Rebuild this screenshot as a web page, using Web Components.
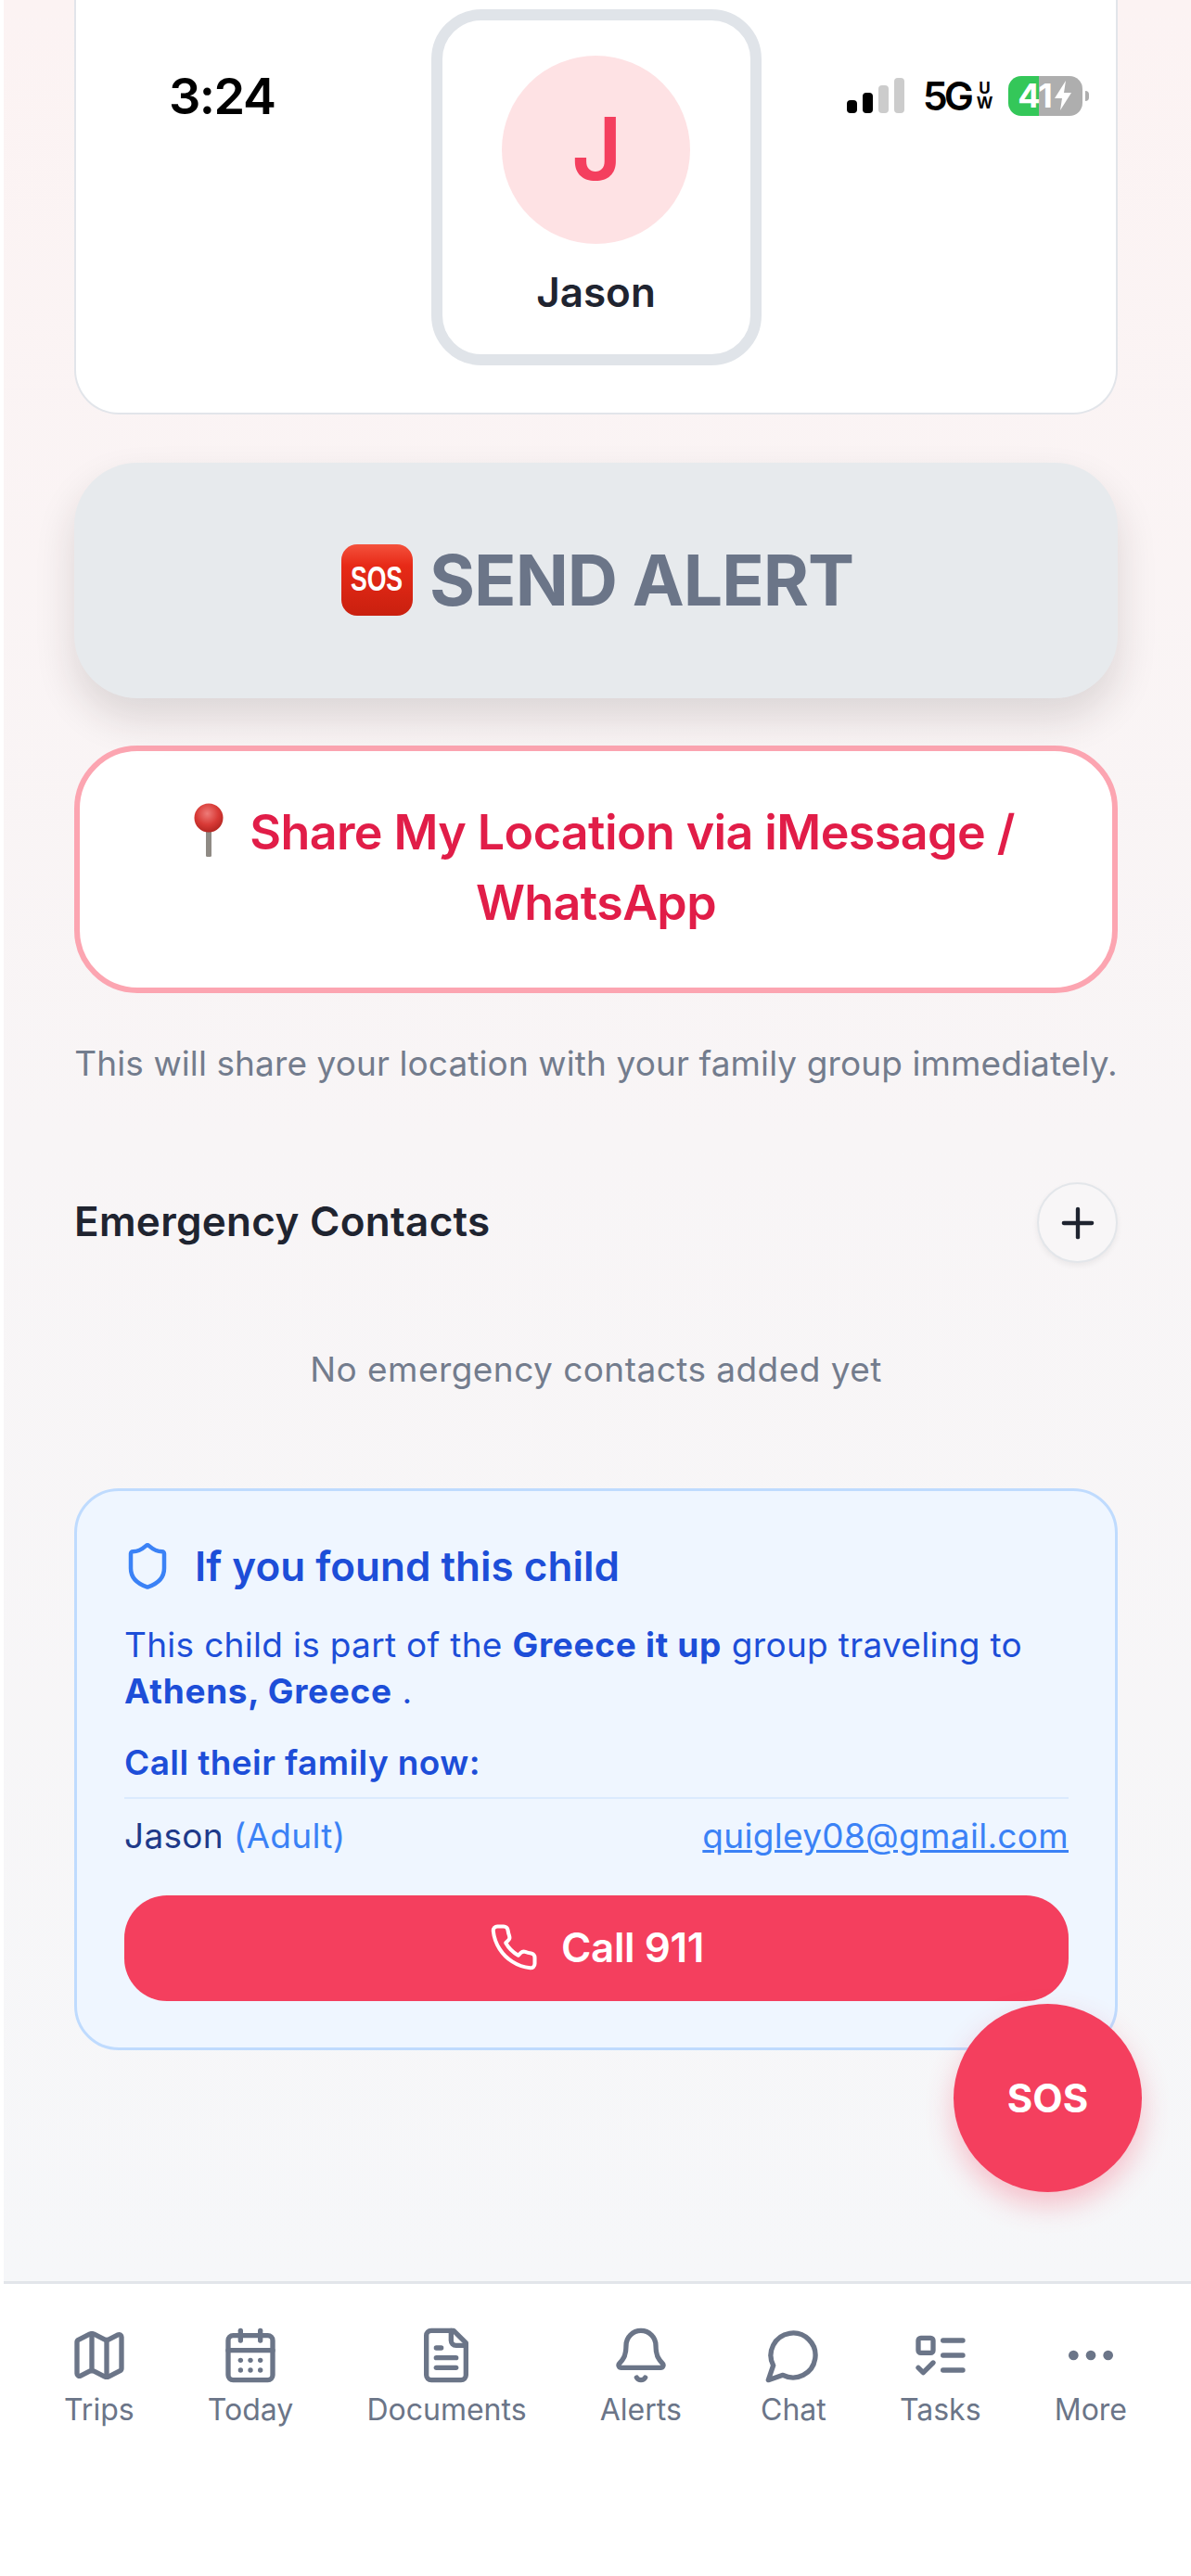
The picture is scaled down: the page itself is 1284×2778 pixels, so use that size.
<!DOCTYPE html>
<html lang="en">
<head>
<meta charset="utf-8">
<title>SOS</title>
<style>
  html, body { margin: 0; background: #fff; }
  body { font-family: Inter, "Noto Sans", sans-serif; }
</style>
</head>
<body>
<app-shell>
  <status-overlay slot="overlay"></status-overlay>
  <sos-fab slot="overlay">SOS</sos-fab>
  <member-card name="Jason" initial="J"></member-card>
  <alert-button>SEND ALERT</alert-button>
  <share-button></share-button>
  <contacts-section></contacts-section>
  <found-card></found-card>
  <bottom-nav slot="nav">
    <nav-item>
      <svg slot="icon" viewBox="0 0 24 24"><path d="M14.106 5.553a2 2 0 0 0 1.788 0l3.659-1.83A1 1 0 0 1 21 4.619v12.764a1 1 0 0 1-.553.894l-4.553 2.277a2 2 0 0 1-1.788 0l-4.212-2.106a2 2 0 0 0-1.788 0l-3.659 1.83A1 1 0 0 1 3 19.381V6.618a1 1 0 0 1 .553-.894l4.553-2.277a2 2 0 0 1 1.788 0z"/><path d="M15 5.764v15"/><path d="M9 3.236v15"/></svg>
      Trips
    </nav-item>
    <nav-item>
      <svg slot="icon" viewBox="0 0 24 24"><path d="M8 2v4"/><path d="M16 2v4"/><rect x="3" y="4" width="18" height="18" rx="2"/><path d="M3 10h18"/><path d="M8 14h.01"/><path d="M12 14h.01"/><path d="M16 14h.01"/><path d="M8 18h.01"/><path d="M12 18h.01"/><path d="M16 18h.01"/></svg>
      Today
    </nav-item>
    <nav-item>
      <svg slot="icon" viewBox="0 0 24 24"><path d="M15 2H6a2 2 0 0 0-2 2v16a2 2 0 0 0 2 2h12a2 2 0 0 0 2-2V7Z"/><path d="M14 2v4a2 2 0 0 0 2 2h4"/><path d="M10 9H8"/><path d="M16 13H8"/><path d="M16 17H8"/></svg>
      Documents
    </nav-item>
    <nav-item>
      <svg slot="icon" viewBox="0 0 24 24"><path d="M10.268 21a2 2 0 0 0 3.464 0"/><path d="M3.262 15.326A1 1 0 0 0 4 17h16a1 1 0 0 0 .74-1.673C19.41 13.956 18 12.499 18 8A6 6 0 0 0 6 8c0 4.499-1.411 5.956-2.738 7.326"/></svg>
      Alerts
    </nav-item>
    <nav-item>
      <svg slot="icon" viewBox="0 0 24 24"><path d="M7.9 20A9 9 0 1 0 4 16.1L2 22Z"/></svg>
      Chat
    </nav-item>
    <nav-item>
      <svg slot="icon" viewBox="0 0 24 24"><rect x="3" y="5" width="6" height="6" rx="1"/><path d="m3 17 2 2 4-4"/><path d="M13 6h8"/><path d="M13 12h8"/><path d="M13 18h8"/></svg>
      Tasks
    </nav-item>
    <nav-item>
      <svg slot="icon" viewBox="0 0 24 24"><circle cx="12" cy="12" r="1"/><circle cx="19" cy="12" r="1"/><circle cx="5" cy="12" r="1"/></svg>
      More
    </nav-item>
  </bottom-nav>
</app-shell>

<script>
class AppShell extends HTMLElement {
  constructor() {
    super();
    this.attachShadow({ mode: "open" });
    this.shadowRoot.innerHTML = `
      <style>
        :host { display: block; position: relative; height: 2778px; overflow: hidden; padding-left: 4px; background: #fff; }
        #frame { height: 100%; display: flex; flex-direction: column; }
        main {
          flex: 1; min-height: 0; overflow: hidden;
          padding: 0 79px 0 76px;
          background: linear-gradient(180deg, #fcf3f3 0%, #f8f5f6 50%, #f6f7f9 100%);
        }
      </style>
      <div id="frame">
        <main><slot></slot></main>
        <slot name="nav"></slot>
      </div>
      <slot name="overlay"></slot>
    `;
  }
}
customElements.define("app-shell", AppShell);

class StatusOverlay extends HTMLElement {
  constructor() {
    super();
    this.attachShadow({ mode: "open" });
    this.shadowRoot.innerHTML = `
      <style>
        :host {
          position: absolute; top: 0; left: 0; right: 0; height: 206px;
          display: flex; justify-content: space-between; align-items: center;
          padding: 0 110px 0 182px; box-sizing: border-box;
          color: #000;
        }
        #time { font: 600 54px/60px Inter, sans-serif; letter-spacing: -1.5px; margin-top: 2px; }
        #right { display: flex; align-items: center; }
        #bars { display: flex; align-items: flex-end; gap: 6px; height: 38px; margin-right: 20px; }
        #bars i { display: block; width: 11px; border-radius: 4px; background: #ccc; }
        #bars i:nth-child(1) { height: 14px; background: #000; }
        #bars i:nth-child(2) { height: 22px; background: #000; }
        #bars i:nth-child(3) { height: 30px; }
        #bars i:nth-child(4) { height: 38px; }
        #net { font: 600 43px/42px Inter, sans-serif; letter-spacing: -4px; margin-right: 8px; }
        #uw { display: flex; flex-direction: column; width: 14px; align-items: center; font: 700 17px/16px Inter, sans-serif; letter-spacing: -1px; margin-right: 19px; }
        #bat {
          width: 80px; height: 43px; border-radius: 14px;
          background: linear-gradient(90deg, #34c759 41%, #aeaeae 41%);
          color: #fff; font: 700 36px/43px Inter, sans-serif;
          display: flex; align-items: center; justify-content: center; gap: 0;
          letter-spacing: -1px;
        }
        #bat svg { width: 22px; height: 34px; margin-left: 1px; }
        #nub { width: 4px; height: 11px; background: #aeaeae; border-radius: 0 4px 4px 0; margin-left: 3px; }
      </style>
      <span id="time">3:24</span>
      <div id="right">
        <div id="bars"><i></i><i></i><i></i><i></i></div>
        <span id="net">5G</span>
        <span id="uw"><span>U</span><span>W</span></span>
        <div id="bat">41<svg viewBox="0 0 22 34"><path d="M14 1 2 20h8l-2 13 12-19h-8z" fill="#fff"/></svg></div>
        <div id="nub"></div>
      </div>
    `;
  }
}
customElements.define("status-overlay", StatusOverlay);

class MemberCard extends HTMLElement {
  constructor() {
    super();
    this.attachShadow({ mode: "open" });
    this.shadowRoot.innerHTML = `
      <style>
        :host {
          display: flex; justify-content: center; height: 447px; box-sizing: border-box;
          padding-top: 10px;
          background: #fff; border: 2px solid #e2e5ea; border-top: 0;
          border-radius: 0 0 48px 48px;
        }
        #tile {
          width: 356px; height: 384px; box-sizing: border-box;
          border: 12px solid #e0e4e9; border-radius: 54px;
          display: flex; flex-direction: column; align-items: center;
          padding-top: 38px;
        }
        #avatar {
          width: 203px; height: 203px; border-radius: 50%; box-sizing: border-box;
          background: #fee2e4; color: #f43f5e;
          display: flex; align-items: center; justify-content: center;
          font: 600 94px/1 Inter, sans-serif; padding: 0 0 4px 2px;
        }
        #name { margin-top: 24px; font: 600 44px/56px Inter, sans-serif; color: #1f2430; }
      </style>
      <div id="tile">
        <div id="avatar"></div>
        <div id="name"></div>
      </div>
    `;
    this.shadowRoot.getElementById("avatar").textContent = this.getAttribute("initial") || "J";
    this.shadowRoot.getElementById("name").textContent = this.getAttribute("name") || "Jason";
  }
}
customElements.define("member-card", MemberCard);

class AlertButton extends HTMLElement {
  constructor() {
    super();
    this.attachShadow({ mode: "open" });
    this.shadowRoot.innerHTML = `
      <style>
        :host {
          display: flex; align-items: center; justify-content: center; gap: 21px;
          position: relative;
          height: 254px; margin-top: 52px; box-sizing: border-box; padding-bottom: 2px;
          background: #e7eaed; border-radius: 68px;
          box-shadow: 0 22px 44px rgba(40, 30, 30, .14);
          color: #6b7588; font: 700 75px/1 Inter, sans-serif; letter-spacing: -1px;
        }
        #sos {
          width: 77px; height: 77px; border-radius: 17px; margin: 0 -3px 0 3px;
          background: linear-gradient(180deg, #f4513c 0%, #e72a17 30%, #c9200f 100%);
          display: flex; align-items: center; justify-content: center;
          overflow: hidden;
        }
        #sos span {
          color: #fff; font: 700 36px/1 "Liberation Sans", sans-serif; letter-spacing: 0;
          transform: scaleX(.74);
        }
      </style>
      <span id="sos"><span>SOS</span></span>
      <span><slot></slot></span>
    `;
  }
}
customElements.define("alert-button", AlertButton);

class ShareButton extends HTMLElement {
  constructor() {
    super();
    this.attachShadow({ mode: "open" });
    this.shadowRoot.innerHTML = `
      <style>
        :host {
          display: flex; align-items: center; justify-content: center;
          height: 267px; margin-top: 51px; box-sizing: border-box;
          background: #fff; border: 6px solid #fca5b1; border-radius: 68px;
          text-align: center; color: #e11d48;
          font: 600 52px/76px Inter, sans-serif; letter-spacing: -.6px;
          padding-bottom: 3px;
        }
        svg { width: 32px; height: 58px; vertical-align: -8px; margin: 0 28px 0 18px; }
      </style>
      <div>
        <svg viewBox="0 0 32 58">
          <defs><radialGradient id="ball" cx=".45" cy=".35" r=".65"><stop offset="0" stop-color="#ee7b78"/><stop offset=".6" stop-color="#d83a36"/><stop offset="1" stop-color="#b52622"/></radialGradient></defs>
          <rect x="13" y="28" width="6" height="30" rx="1.5" fill="#8f8a84"/>
          <circle cx="16" cy="16" r="15.5" fill="url(#ball)"/>
        </svg>Share My Location via iMessage /<br>WhatsApp
      </div>
    `;
  }
}
customElements.define("share-button", ShareButton);

class ContactsSection extends HTMLElement {
  constructor() {
    super();
    this.attachShadow({ mode: "open" });
    this.shadowRoot.innerHTML = `
      <style>
        :host { display: block; }
        #note { margin: 51px 0 0; text-align: center; font: 400 37px/50px Inter, sans-serif; letter-spacing: .1px; color: #737c8d; white-space: nowrap; }
        #head { display: flex; align-items: center; justify-content: space-between; margin-top: 103px; }
        h2 { margin: -4px 0 0; font: 600 44px/56px Inter, sans-serif; letter-spacing: .3px; color: #1f2430; }
        button {
          width: 87px; height: 87px; padding: 0; border-radius: 50%;
          background: #f8f6f7; border: 2px solid #e3e6ea;
          box-shadow: 0 3px 6px rgba(0, 0, 0, .06);
          display: flex; align-items: center; justify-content: center;
        }
        svg { width: 52px; height: 52px; fill: none; stroke: #1f2430; stroke-width: 2; stroke-linecap: round; }
        #empty { margin: 90px 0 0; text-align: center; font: 400 37px/50px Inter, sans-serif; letter-spacing: .45px; color: #737c8d; }
      </style>
      <p id="note">This will share your location with your family group immediately.</p>
      <div id="head">
        <h2>Emergency Contacts</h2>
        <button aria-label="Add"><svg viewBox="0 0 24 24"><path d="M5 12h14"/><path d="M12 5v14"/></svg></button>
      </div>
      <p id="empty">No emergency contacts added yet</p>
    `;
  }
}
customElements.define("contacts-section", ContactsSection);

class FoundCard extends HTMLElement {
  constructor() {
    super();
    this.attachShadow({ mode: "open" });
    this.shadowRoot.innerHTML = `
      <style>
        :host {
          display: block; margin-top: 103px; box-sizing: border-box; height: 606px;
          padding: 54px 50px 0 51px;
          background: #eff6ff; border: 3px solid #bfdbfe; border-radius: 48px;
          color: #1d4ed8; font: 400 37px/50px Inter, sans-serif; letter-spacing: .3px;
        }
        #title { display: flex; align-items: center; gap: 24px; height: 54px; }
        #title svg { width: 54px; height: 54px; margin-left: -2px; fill: none; stroke: #3b82f6; stroke-width: 2; stroke-linecap: round; stroke-linejoin: round; }
        h3 { margin: 0; font: 600 44px/54px Inter, sans-serif; letter-spacing: 0; }
        p { margin: 33px 0 0; }
        b { font-weight: 700; letter-spacing: .7px; }
        #call { margin-top: 27px; font-weight: 600; letter-spacing: .4px; }
        #row {
          margin-top: 12px; padding-top: 15px; border-top: 2px solid #dbeafe;
          display: flex; justify-content: space-between;
        }
        #who { color: #1e3a8a; }
        #who span { color: #3b82f6; }
        a { color: #3b82f6; text-decoration: underline; }
        #btn {
          margin-top: 39px; height: 114px; box-sizing: border-box; padding-bottom: 2px; border-radius: 46px;
          background: #f43f5e; color: #fff;
          display: flex; align-items: center; justify-content: center; gap: 24px;
          font: 600 44px/1 Inter, sans-serif; letter-spacing: -.4px;
        }
        #btn svg { width: 54px; height: 54px; fill: none; stroke: #fff; stroke-width: 1.8; stroke-linecap: round; stroke-linejoin: round; }
      </style>
      <div id="title">
        <svg viewBox="0 0 24 24"><path d="M20 13c0 5-3.5 7.5-7.66 8.95a1 1 0 0 1-.67-.01C7.5 20.5 4 18 4 13V6a1 1 0 0 1 1-1c2 0 4.5-1.2 6.24-2.72a1.17 1.17 0 0 1 1.52 0C14.51 3.81 17 5 19 5a1 1 0 0 1 1 1z"/></svg>
        <h3>If you found this child</h3>
      </div>
      <p>This child is part of the <b>Greece it up</b> group traveling to <b>Athens, Greece</b> .</p>
      <div id="call">Call their family now:</div>
      <div id="row">
        <span id="who">Jason <span>(Adult)</span></span>
        <a href="#">quigley08@gmail.com</a>
      </div>
      <div id="btn">
        <svg viewBox="0 0 24 24"><path d="M22 16.92v3a2 2 0 0 1-2.18 2 19.79 19.79 0 0 1-8.63-3.07 19.5 19.5 0 0 1-6-6 19.79 19.79 0 0 1-3.07-8.67A2 2 0 0 1 4.11 2h3a2 2 0 0 1 2 1.72 12.84 12.84 0 0 0 .7 2.81 2 2 0 0 1-.45 2.11L8.09 9.91a16 16 0 0 0 6 6l1.27-1.27a2 2 0 0 1 2.11-.45 12.84 12.84 0 0 0 2.81.7A2 2 0 0 1 22 16.92z"/></svg>
        Call 911
      </div>
    `;
  }
}
customElements.define("found-card", FoundCard);

class SosFab extends HTMLElement {
  constructor() {
    super();
    this.attachShadow({ mode: "open" });
    this.shadowRoot.innerHTML = `
      <style>
        :host {
          position: absolute; right: 53px; bottom: 414px;
          width: 203px; height: 203px; border-radius: 50%;
          background: #f43f5e; color: #fff;
          box-shadow: 0 14px 30px rgba(244, 63, 94, .3);
          display: flex; align-items: center; justify-content: center;
          font: 700 42px/1 Inter, sans-serif;
        }
      </style>
      <slot></slot>
    `;
  }
}
customElements.define("sos-fab", SosFab);

class BottomNav extends HTMLElement {
  constructor() {
    super();
    this.attachShadow({ mode: "open" });
    this.shadowRoot.innerHTML = `
      <style>
        :host {
          display: flex; justify-content: space-between; align-items: flex-start;
          height: 318px; box-sizing: border-box;
          padding: 45px 69px 0 65px;
          background: #fff; border-top: 3px solid #e2e5ea;
        }
        ::slotted(nav-item:nth-child(5)) { margin-left: 6px; }
      </style>
      <slot></slot>
    `;
  }
}
customElements.define("bottom-nav", BottomNav);

class NavItem extends HTMLElement {
  constructor() {
    super();
    this.attachShadow({ mode: "open" });
    this.shadowRoot.innerHTML = `
      <style>
        :host {
          display: flex; flex-direction: column; align-items: center; gap: 7px;
          color: #6b7588; font: 400 32px/40px Inter, sans-serif; letter-spacing: 0;
        }
        ::slotted(svg) {
          width: 64px; height: 64px; display: block;
          fill: none; stroke: #6b7588; stroke-width: 2; stroke-linecap: round; stroke-linejoin: round;
        }
      </style>
      <slot name="icon"></slot>
      <span><slot></slot></span>
    `;
  }
}
customElements.define("nav-item", NavItem);
</script>
</body>
</html>
